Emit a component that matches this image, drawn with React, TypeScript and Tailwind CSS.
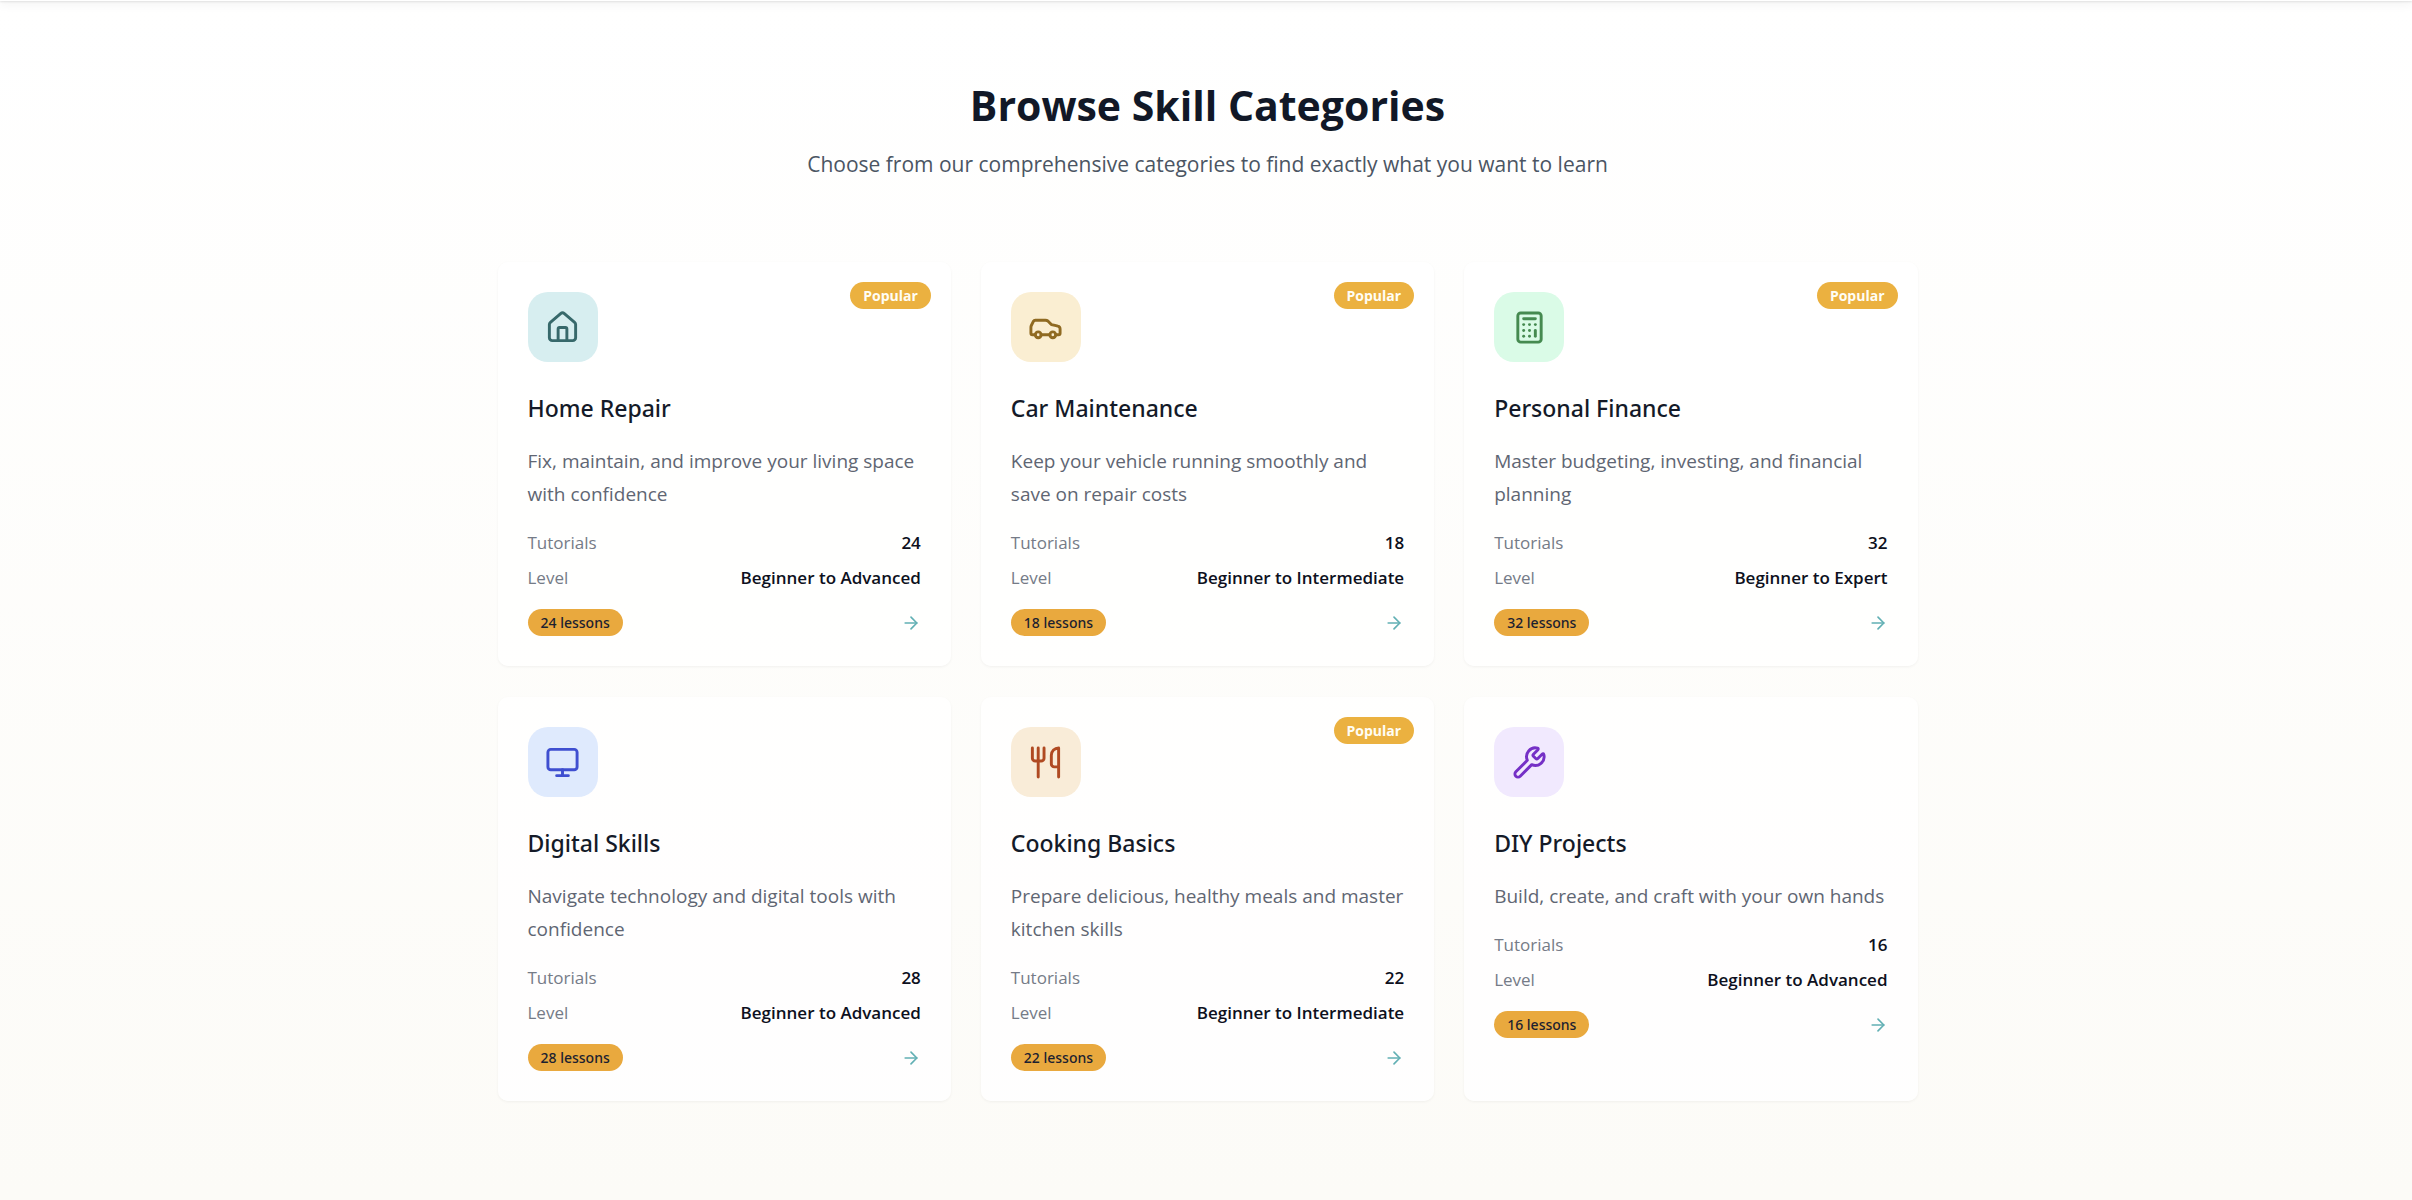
import { ArrowRight, Calculator, Car, House, Monitor, Utensils, Wrench, type LucideIcon } from "lucide-react";

type Category = {
  slug: string;
  name: string;
  description: string;
  tutorials: number;
  level: string;
  popular: boolean;
  icon: LucideIcon;
  tone: string;
};

const categories: Category[] = [
  {
    slug: "home-repair",
    name: "Home Repair",
    description: "Fix, maintain, and improve your living space with confidence",
    tutorials: 24,
    level: "Beginner to Advanced",
    popular: true,
    icon: House,
    tone: "bg-[#d7eef0] text-[#37696b]",
  },
  {
    slug: "car-maintenance",
    name: "Car Maintenance",
    description: "Keep your vehicle running smoothly and save on repair costs",
    tutorials: 18,
    level: "Beginner to Intermediate",
    popular: true,
    icon: Car,
    tone: "bg-[#faeed2] text-[#8f6a22]",
  },
  {
    slug: "personal-finance",
    name: "Personal Finance",
    description: "Master budgeting, investing, and financial planning",
    tutorials: 32,
    level: "Beginner to Expert",
    popular: true,
    icon: Calculator,
    tone: "bg-[#dafbe7] text-[#458a50]",
  },
  {
    slug: "digital-skills",
    name: "Digital Skills",
    description: "Navigate technology and digital tools with confidence",
    tutorials: 28,
    level: "Beginner to Advanced",
    popular: false,
    icon: Monitor,
    tone: "bg-[#dfeafd] text-[#3f4fd0]",
  },
  {
    slug: "cooking-basics",
    name: "Cooking Basics",
    description: "Prepare delicious, healthy meals and master kitchen skills",
    tutorials: 22,
    level: "Beginner to Intermediate",
    popular: true,
    icon: Utensils,
    tone: "bg-[#f9ecd8] text-[#b04a22]",
  },
  {
    slug: "diy-projects",
    name: "DIY Projects",
    description: "Build, create, and craft with your own hands",
    tutorials: 16,
    level: "Beginner to Advanced",
    popular: false,
    icon: Wrench,
    tone: "bg-[#f1e9fe] text-[#7530c6]",
  },
];

function DetailRow({ label, value }: { label: string; value: string | number }) {
  return (
    <div className="flex items-center justify-between gap-4">
      <dt className="text-[#757b87]">{label}</dt>
      <dd className="font-semibold text-[#0d1020]">{value}</dd>
    </div>
  );
}

function CategoryCard({ category }: { category: Category }) {
  const Icon = category.icon;
  return (
    <article className="relative rounded-[10px] bg-white/80 p-[30px] shadow-[0_1px_3px_rgba(0,0,0,0.05)]">
      {category.popular && (
        <span className="absolute top-5 right-5 flex h-[27px] items-center rounded-full bg-[#ebb140] px-[13px] text-sm font-bold text-[#fffdf5]">
          Popular
        </span>
      )}
      <div className={`flex size-[70px] items-center justify-center rounded-[20px] ${category.tone}`}>
        <Icon size={35} strokeWidth={2} aria-hidden="true" />
      </div>
      <h3 className="mt-[26px] font-['Noto_Sans',sans-serif] text-[23px] leading-10 font-medium text-[#141a28]">
        {category.name}
      </h3>
      <p className="mt-[17px] text-[19px] leading-[33px] text-[#5f6673]">{category.description}</p>
      <dl className="mt-[19px] flex flex-col gap-2.5 text-[17px] leading-[25px]">
        <DetailRow label="Tutorials" value={category.tutorials} />
        <DetailRow label="Level" value={category.level} />
      </dl>
      <div className="mt-[19px] flex items-center justify-between">
        <span className="flex h-[27px] items-center rounded-full bg-[#e9a93e] px-[13px] font-['Noto_Sans',sans-serif] text-sm font-medium text-[#1c2130]">
          {category.tutorials} lessons
        </span>
        <a href={`#${category.slug}`} aria-label={`View ${category.name}`} className="text-[#62b0b4]">
          <ArrowRight size={20} aria-hidden="true" />
        </a>
      </div>
    </article>
  );
}

export default function App() {
  return (
    <div className="flex min-h-screen flex-col bg-white font-['Open_Sans','Noto_Sans',sans-serif]">
      <header className="relative z-10 h-px bg-white shadow-[0_1px_2px_rgba(0,0,0,0.15),0_2px_8px_rgba(0,0,0,0.25)]" />
      <main className="grow bg-linear-to-b from-white to-[#fcfbf7] pt-[74px] pb-[98px] pl-[3px]">
        <div className="mx-auto max-w-[1460px] px-5">
          <div className="text-center">
            <h2 className="text-[41px] leading-[60px] font-bold text-[#111827]">Browse Skill Categories</h2>
            <p className="mt-[11px] text-[21px] leading-9 text-[#4b5563]">
              Choose from our comprehensive categories to find exactly what you want to learn
            </p>
          </div>
          <div className="mt-20 grid gap-x-[30px] gap-y-[31px] md:grid-cols-2 xl:grid-cols-3">
            {categories.map((category) => (
              <CategoryCard key={category.slug} category={category} />
            ))}
          </div>
        </div>
      </main>
    </div>
  );
}
